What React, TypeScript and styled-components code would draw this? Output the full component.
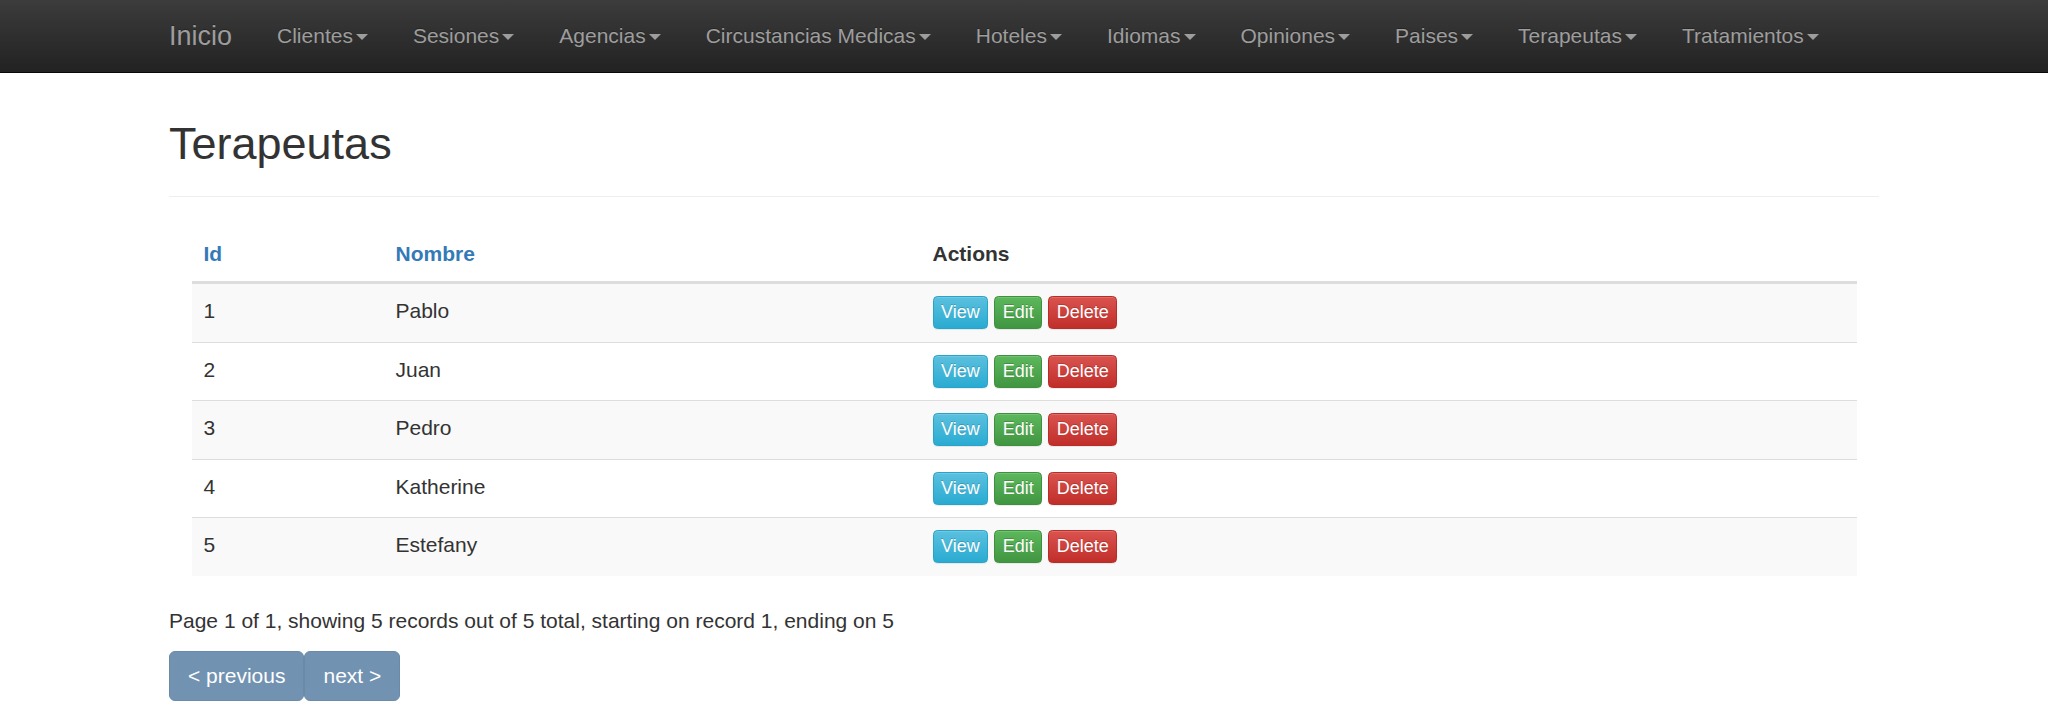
import styled, { createGlobalStyle } from 'styled-components';

const GlobalStyle = createGlobalStyle`
  * { box-sizing: border-box; }
  html, body {
    margin: 0;
    padding: 0;
    background: #fff;
  }
  body {
    font-family: "Liberation Sans", Arial, Helvetica, sans-serif;
    font-size: 21px;
    line-height: 30px;
    color: #333;
  }
`;

const Navbar = styled.nav`
  height: 73px;
  background-image: linear-gradient(to bottom, #3c3c3c 0%, #222 100%);
  border-bottom: 1px solid #080808;
`;

const Container = styled.div`
  width: 1755px;
  margin: 0 auto;
  padding: 0 22.5px;
`;

const NavInner = styled(Container)`
  display: flex;
  align-items: center;
  height: 100%;
`;

const Brand = styled.a`
  font-size: 27px;
  line-height: 30px;
  color: #9d9d9d;
  text-decoration: none;
  padding-right: 22.5px;
  text-shadow: 0 -1px 0 rgba(0, 0, 0, 0.25);
`;

const NavList = styled.ul`
  display: flex;
  list-style: none;
  margin: 0;
  padding: 0;
`;

const NavLink = styled.a`
  display: flex;
  align-items: center;
  padding: 0 22.5px;
  color: #9d9d9d;
  font-size: 21px;
  line-height: 30px;
  text-decoration: none;
  text-shadow: 0 -1px 0 rgba(0, 0, 0, 0.25);
`;

const Caret = styled.span`
  display: inline-block;
  width: 0;
  height: 0;
  margin-left: 3px;
  margin-top: 2px;
  border-top: 6px solid #9d9d9d;
  border-left: 6px solid transparent;
  border-right: 6px solid transparent;
`;

const PageHeader = styled.div`
  margin: 46px 0 30px;
  padding-bottom: 13.5px;
  border-bottom: 1px solid #eee;
`;

const Title = styled.h1`
  margin: 0 0 14px;
  font-size: 45px;
  line-height: 49.5px;
  font-weight: 400;
  color: #333;
`;

const TableWrap = styled.div`
  padding: 0 22.5px;
`;

const Table = styled.table`
  width: 100%;
  border-collapse: collapse;
  border-spacing: 0;
  margin-bottom: 30px;
`;

const HeadCell = styled.th<{ $width?: number }>`
  width: ${(p) => (p.$width ? `${p.$width}px` : 'auto')};
  text-align: left;
  vertical-align: bottom;
  padding: 12px;
  font-weight: 700;
  line-height: 30px;
  border-bottom: 3px solid #ddd;
`;

const SortLink = styled.a`
  color: #337ab7;
  text-decoration: none;
`;

const BodyRow = styled.tr<{ $striped: boolean }>`
  background: ${(p) => (p.$striped ? '#f9f9f9' : '#fff')};
`;

const Cell = styled.td`
  padding: 12.25px 12px;
  line-height: 30px;
  vertical-align: top;
  border-top: 1px solid #ddd;
`;

const Actions = styled.div`
  display: flex;
  gap: 6px;
`;

const variants = {
  info: { from: '#5bc0de', to: '#2aabd2', border: '#28a4c9' },
  success: { from: '#5cb85c', to: '#419641', border: '#3e8f3e' },
  danger: { from: '#d9534f', to: '#c12e2a', border: '#b92c28' },
};

const ActionButton = styled.a<{ $variant: keyof typeof variants }>`
  display: inline-block;
  padding: 2px 7.5px;
  font-size: 18px;
  line-height: 27px;
  color: #fff;
  text-decoration: none;
  border-radius: 4.5px;
  border: 1px solid ${(p) => variants[p.$variant].border};
  background-image: linear-gradient(
    to bottom,
    ${(p) => variants[p.$variant].from} 0%,
    ${(p) => variants[p.$variant].to} 100%
  );
  text-shadow: 0 -1px 0 rgba(0, 0, 0, 0.2);
  box-shadow: inset 0 1px 0 rgba(255, 255, 255, 0.15), 0 1px 1px rgba(0, 0, 0, 0.075);
`;

const Summary = styled.p`
  margin: 0 0 15px;
`;

const Pager = styled.div`
  display: flex;
`;

const PageButton = styled.a`
  display: inline-block;
  padding: 9px 18px;
  font-size: 21px;
  line-height: 30px;
  color: #fff;
  text-decoration: none;
  background: #7292b1;
  border: 1px solid #6a8aa9;
  border-radius: 6px;
`;

const menus = [
  'Clientes',
  'Sesiones',
  'Agencias',
  'Circustancias Medicas',
  'Hoteles',
  'Idiomas',
  'Opiniones',
  'Paises',
  'Terapeutas',
  'Tratamientos',
];

const terapeutas = [
  { id: 1, nombre: 'Pablo' },
  { id: 2, nombre: 'Juan' },
  { id: 3, nombre: 'Pedro' },
  { id: 4, nombre: 'Katherine' },
  { id: 5, nombre: 'Estefany' },
];

export default function App() {
  return (
    <>
      <GlobalStyle />
      <Navbar>
        <NavInner>
          <Brand href="#">Inicio</Brand>
          <NavList>
            {menus.map((m) => (
              <li key={m}>
                <NavLink href="#">
                  {m}
                  <Caret />
                </NavLink>
              </li>
            ))}
          </NavList>
        </NavInner>
      </Navbar>
      <Container>
        <PageHeader>
          <Title>Terapeutas</Title>
        </PageHeader>
        <TableWrap>
          <Table>
            <thead>
              <tr>
                <HeadCell $width={192}><SortLink href="#">Id</SortLink></HeadCell>
                <HeadCell $width={537}><SortLink href="#">Nombre</SortLink></HeadCell>
                <HeadCell>Actions</HeadCell>
              </tr>
            </thead>
            <tbody>
              {terapeutas.map((t, i) => (
                <BodyRow key={t.id} $striped={i % 2 === 0}>
                  <Cell>{t.id}</Cell>
                  <Cell>{t.nombre}</Cell>
                  <Cell>
                    <Actions>
                      <ActionButton href="#" $variant="info">View</ActionButton>
                      <ActionButton href="#" $variant="success">Edit</ActionButton>
                      <ActionButton href="#" $variant="danger">Delete</ActionButton>
                    </Actions>
                  </Cell>
                </BodyRow>
              ))}
            </tbody>
          </Table>
        </TableWrap>
        <Summary>
          Page 1 of 1, showing 5 records out of 5 total, starting on record 1, ending on 5
        </Summary>
        <Pager>
          <PageButton href="#">&lt; previous</PageButton>
          <PageButton href="#">next &gt;</PageButton>
        </Pager>
      </Container>
    </>
  );
}
